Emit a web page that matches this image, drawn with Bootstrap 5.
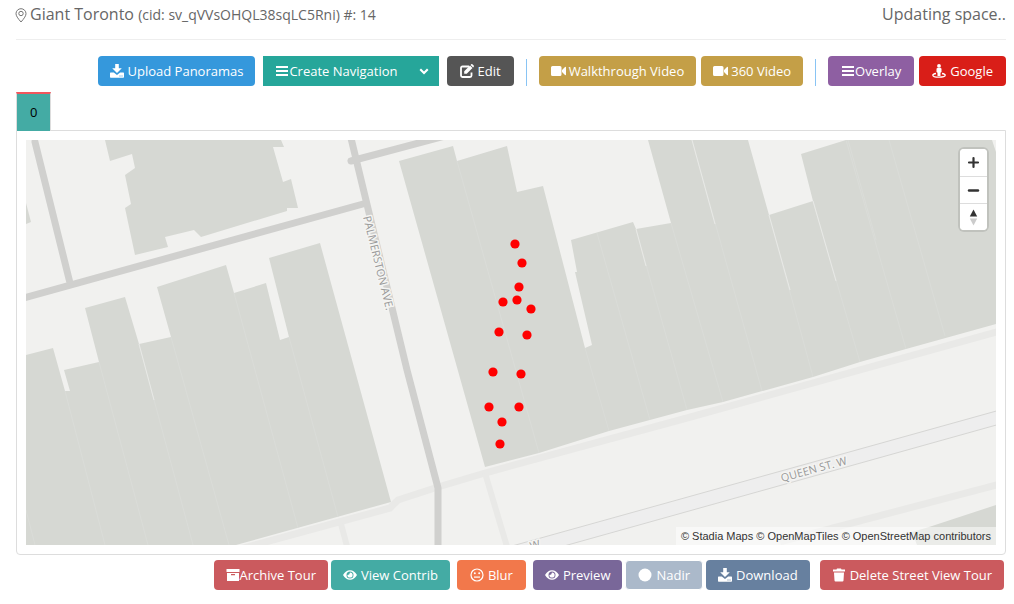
<!DOCTYPE html>
<html lang="en">
<head>
<meta charset="utf-8">
<meta name="viewport" content="width=device-width, initial-scale=1">
<title>Giant Toronto</title>
<link href="https://cdn.jsdelivr.net/npm/bootstrap@5.3.0/dist/css/bootstrap.min.css" rel="stylesheet">
<style>
body { font-family: "Open Sans", sans-serif; font-size: 13px; color: #333; background: #fff; }
.page { padding: 0 8px 8px 16px; }
.page-head { height: 40px; padding-top: 2px; border-bottom: 1px solid #eee; color: #666; line-height: 24px; }
.page-head h1, .state { font-size: 16px; line-height: 24px; font-weight: 400; }
.page-head h1 small { font-size: 14px; }
.page-head svg { width: 12px; height: 15px; margin: 0 3px 0 -1px; }
.tool { --bs-btn-font-size: 13px; --bs-btn-line-height: 20px; --bs-btn-padding-x: 11px; --bs-btn-padding-y: 4px; --bs-btn-border-radius: 4px;
  --bs-btn-color: #fff; --bs-btn-hover-color: #fff; --bs-btn-active-color: #fff; --bs-btn-disabled-color: #fff; --bs-btn-disabled-opacity: .55;
  display: inline-flex; align-items: center; justify-content: center; gap: 4px; white-space: nowrap; }
.tool, .tool:hover, .tool:disabled { background-color: var(--tone); }
.tool svg { width: 14px; height: 14px; fill: currentColor; flex: none; }
.tool.roomy { --bs-btn-padding-x: 12px; }
.tool.tight { gap: 0; }
.tool.video { gap: 2px; }
.tool.video svg { width: 16px; }
.tone-blue { --tone: #3598dc; }
.tone-green { --tone: #26a69a; }
.tone-dark { --tone: #555; }
.tone-gold { --tone: #c49f47; }
.tone-purple { --tone: #8e5fa2; }
.tone-red { --tone: #d91e18; }
.tone-rose { --tone: #cb5a5e; }
.tone-teal { --tone: #44aba4; }
.tone-orange { --tone: #f2784b; }
.tone-plum { --tone: #796799; }
.tone-slate { --tone: #67809f; }
.near { margin-right: 5px; }
.bottom-tools .near { margin-right: 3px; }
.apart { margin-right: 7px; }
.far { margin-right: 10px; }
.top-tools { padding: 16px 0 6px; }
.rule { width: 1px; height: 27px; margin: 0 12px; background: #89c4f4; align-self: flex-end; }
.split .tool { border-radius: 0; }
.split .caret { --bs-btn-padding-x: 8px; }
.split .caret svg { width: 12px; }
.floors { border: 0; }
.floors .nav-link { margin: 0; padding: 8px 13px; line-height: 20px; height: 39px; border-radius: 0; border: 1px solid #ddd; border-bottom: 0; }
.floors .nav-link.active { background: #44aba4; color: #000; border-color: #ddd; border-top: 2px solid #f3565d; }
.map-panel { margin-top: -1px; padding: 9px; border: 1px solid #ddd; border-radius: 0 0 4px 4px; }
.map { display: block; width: 100%; height: auto; background: #f1f1ef; }
.zooms { position: absolute; top: 9px; right: 9px; width: 27px; border-radius: 4px; background: #fff; box-shadow: 0 0 0 2px rgba(0,0,0,.1); overflow: hidden; }
.zooms button { display: flex; width: 27px; height: 27px; padding: 0; border: 0; background: #fff; align-items: center; justify-content: center; }
.zooms button + button { border-top: 1px solid #ddd; }
.zooms svg { width: 13px; height: 17px; }
.credits { position: absolute; right: 0; bottom: 0; padding: 0 5px; background: rgba(255,255,255,.5); font: 11px/18px "Liberation Sans", sans-serif; }
.credits a { color: #333; text-decoration: none; }
.bottom-tools { padding: 5px 2px 0 0; }
</style>
</head>
<body>
<svg class="d-none">
  <symbol id="i-download" viewBox="0 0 14 14"><path d="M5.2 0h3.6v4.2h3L7 9 2.200 4.200h3z"/><path fill-rule="evenodd" d="M.6 8.600h3.200L7 11l3.200-2.400h3.200q.6 0 .6.6V13q0 .7-.7.7H.7Q0 13.700 0 13V9.200q0-.6.6-.6zM9.500 11.600v1h1v-1zm2 0v1h1v-1z"/></symbol>
  <symbol id="i-bars" viewBox="0 0 14 14"><path d="M1 2h12v2H1zm0 4h12v2H1zm0 4h12v2H1z"/></symbol>
  <symbol id="i-video" viewBox="0 0 16 14"><path d="M1.500 2h7.500q1.500 0 1.500 1.500v7Q10.500 12 9 12H1.500Q0 12 0 10.500v-7Q0 2 1.500 2zM11 6l3-3q.8-.5 1 .3v7.400q-.2.800-1 .3l-3-3z"/></symbol>
  <symbol id="i-eye" viewBox="0 0 14 14"><path fill-rule="evenodd" d="M0 7Q2.700 2.300 7 2.300T14 7q-2.700 4.700-7 4.700T0 7zm3.500 0a3.500 3.500 0 1 0 7 0 3.500 3.500 0 1 0-7 0z"/><path d="M7 4.400A2.600 2.600 0 1 1 4.400 7Q6.700 7 7 4.400z"/></symbol>
</svg>
<div class="page">
  <header class="page-head d-flex justify-content-between">
    <h1 class="m-0"><svg viewBox="0 0 12 15" fill="none" stroke="#777"><path d="M6 14Q1 8.500 1 5.700a5 5 0 0 1 10 0Q11 8.500 6 14z"/><circle cx="6" cy="5.500" r="2.200"/></svg>Giant Toronto <small>(cid: sv_qVVsOHQL38sqLC5Rni) #: 14</small></h1>
    <div class="state">Updating space..</div>
  </header>

  <div class="top-tools d-flex flex-wrap justify-content-end">
    <button type="button" class="btn tool tone-blue me-2"><svg><use href="#i-download"/></svg>Upload Panoramas</button>
    <div class="btn-group split me-2">
      <button type="button" class="btn tool tight tone-green"><svg><use href="#i-bars"/></svg>Create Navigation</button>
      <button type="button" class="btn tool caret tone-green" aria-label="More navigation"><svg viewBox="0 0 12 14"><path d="M1.500 6L3 4.500l3 3 3-3L10.500 6 6 10.500z"/></svg></button>
    </div>
    <button type="button" class="btn tool roomy tone-dark"><svg viewBox="0 0 14 14"><path d="M9 2.500H2.500Q1 2.500 1 4v7.500Q1 13 2.500 13H10q1.500 0 1.500-1.500V8.500" fill="none" stroke="currentColor" stroke-width="1.800"/><path d="M4.200 7.300L10 1.500 12.500 4 6.700 9.800H4.200zM10.600.9l.6-.6q.6-.5 1.200 0l1.300 1.300q.5.600 0 1.200l-.6.6z"/></svg>Edit</button>
    <span class="rule"></span>
    <button type="button" class="btn tool video tone-gold near"><svg><use href="#i-video"/></svg>Walkthrough Video</button>
    <button type="button" class="btn tool video tone-gold"><svg><use href="#i-video"/></svg>360 Video</button>
    <span class="rule"></span>
    <button type="button" class="btn tool tight roomy tone-purple near"><svg><use href="#i-bars"/></svg>Overlay</button>
    <button type="button" class="btn tool roomy tone-red"><svg viewBox="0 0 14 14"><circle cx="7" cy="1.900" r="1.900"/><path d="M5.500 4h3q1 0 1 1v3l-1 .8V12h-3V8.800l-1-.8V5q0-1 1-1z"/><path d="M4 9.500Q.8 10 .8 11.300q0 1.900 6.200 1.900t6.200-1.900Q13.200 10 10 9.500" fill="none" stroke="currentColor" stroke-width="1.300"/></svg>Google</button>
  </div>

  <ul class="nav nav-tabs floors">
    <li class="nav-item"><a class="nav-link active" href="#floor">0</a></li>
  </ul>
  <main id="floor" class="map-panel">
    <div class="position-relative overflow-hidden">
      <svg class="map" viewBox="26 140 970 405" role="img" aria-label="Street map">
        <g fill="none" stroke="#e9e9e7" stroke-width="7">
          <path d="M240 549L390 508 398 500 438 487 485 473 687 418 1000 331M780 542L1000 484"/>
          <path d="M485 473L508 550M341 524L348 550" stroke-width="6"/>
        </g>
        <path d="M516 545L996 411V425L568 545z" fill="#eee"/>
        <path d="M512 546L1000 410M564 546L1000 424" stroke="#d6d6d4" fill="none"/>
        <g fill="#d6d8d3">
          <path d="M26 203L31 222 26 224z"/>
          <path d="M105 140L110 161 132 154 135 168 125 175 131 204 125 208 135 255 168 247 165 237 194 230 201 237 287 211V208H298L291 179 283 182 273 147H284L281 140z"/>
          <path d="M26 355L53 348 65 391H70L64 370 99 362 85 308 125 297 139 344 171 337 157 287 226 265 234 293 266 283 280 340 289 337 269 258 320 243 391 502 236 545H26z"/>
          <path d="M399 161L453 146 457 161 507 146 517 192 543 186 585 348 592 345 575 272H577L571 240 633 222 636 229 671 223 648 140H748L769 215 813 201 801 154 846 140H992L996 152V324L906 349 860 362 813 377 723 402 687 410 609 431 539 453 485 467z"/>
          <path d="M996 505L929 527 912 532 917 545H996z"/>
        </g>
        <g fill="none" stroke="#dadcd8">
          <path d="M65 391L105 545M99 362L148 545M139 344L193 545M171 337L229 545M234 293L298 528M289 337L338 517M26 510L35 545"/>
          <path d="M457 161L539 453M585 348L609 431M597 233L650 420M636 229L687 410M671 223L723 402M692 140L762 391M769 215L813 377M813 201L860 362M846 140L906 349M848 140L876 240M889 140L945 336"/>
          <path d="M139 344L154 400M636 229L646 266M692 140L715 224M769 215L790 290M813 201L836 281" stroke="#e8e9e6"/>
        </g>
        <g fill="none" stroke="#d0d0ce" stroke-width="7" stroke-linecap="round">
          <path d="M35 142L70 283M20 299L363 204M351 161L445 136"/>
          <path d="M350 134L407 370 438 488V550" stroke-linejoin="round"/>
        </g>
        <path id="palmerston" d="M363 217L387 314" fill="none"/>
        <path id="queen" d="M782 482L851 463" fill="none"/>
        <g font-family="Open Sans, sans-serif" font-size="11" fill="#999" stroke="#f4f4f2" stroke-width="3" paint-order="stroke" stroke-linejoin="round">
          <text><textPath href="#palmerston">PALMERSTON AVE.</textPath></text>
          <text><textPath href="#queen">QUEEN ST. W</textPath></text>
          <text transform="translate(531 550) rotate(-15)">W</text>
        </g>
        <g fill="#f00">
          <circle cx="515" cy="244" r="4.600"/><circle cx="522" cy="263" r="4.600"/><circle cx="519" cy="287" r="4.600"/><circle cx="517" cy="300" r="4.600"/><circle cx="503" cy="302" r="4.600"/><circle cx="531" cy="309" r="4.600"/><circle cx="499" cy="332" r="4.600"/><circle cx="527" cy="335" r="4.600"/><circle cx="493" cy="372" r="4.600"/><circle cx="521" cy="374" r="4.600"/><circle cx="489" cy="407" r="4.600"/><circle cx="519" cy="407" r="4.600"/><circle cx="502" cy="422" r="4.600"/><circle cx="500" cy="444" r="4.600"/>
        </g>
      </svg>
      <div class="zooms">
        <button type="button" aria-label="Zoom in"><svg viewBox="0 0 13 17"><path d="M6.500 4v9M2 8.500h9" stroke="#333" stroke-width="2.200" stroke-linecap="round"/></svg></button>
        <button type="button" aria-label="Zoom out"><svg viewBox="0 0 13 17"><path d="M2 8.500h9" stroke="#333" stroke-width="2.400" stroke-linecap="round"/></svg></button>
        <button type="button" aria-label="Reset bearing"><svg viewBox="0 0 13 17"><path d="M6.500 .5l3.700 7H2.800z" fill="#333"/><path d="M6.500 16.500l3.700-7H2.800z" fill="#ccc"/></svg></button>
      </div>
      <div class="credits"><a href="#stadia">© Stadia Maps</a> <a href="#tiles">© OpenMapTiles</a> <a href="#osm">© OpenStreetMap contributors</a></div>
    </div>
  </main>

  <div class="bottom-tools d-flex flex-wrap justify-content-end">
    <button type="button" class="btn tool tight tone-rose near"><svg viewBox="0 0 14 14"><path fill-rule="evenodd" d="M.5 1h13v3H.5zM1 5h12v8H1zm4 1v1.200h4V6z"/></svg>Archive Tour</button>
    <button type="button" class="btn tool tone-teal apart"><svg><use href="#i-eye"/></svg>View Contrib</button>
    <button type="button" class="btn tool roomy tone-orange apart"><svg viewBox="0 0 14 14"><circle cx="7" cy="7" r="6" fill="none" stroke="currentColor" stroke-width="1.200"/><circle cx="4.800" cy="5.300" r="1"/><circle cx="9.200" cy="5.300" r="1"/><path d="M4 8.500h6v1.200H4z"/></svg>Blur</button>
    <button type="button" class="btn tool tone-plum near"><svg><use href="#i-eye"/></svg>Preview</button>
    <button type="button" class="btn tool roomy tone-slate near" disabled><svg viewBox="0 0 14 14"><circle cx="7" cy="7" r="6.500"/></svg>Nadir</button>
    <button type="button" class="btn tool tone-slate far"><svg><use href="#i-download"/></svg>Download</button>
    <button type="button" class="btn tool tone-rose"><svg viewBox="0 0 14 14"><path d="M5 .5h4l.5 1H13v2H1v-2h3.500zM2 4.500h10l-.5 8q-.1 1-1 1h-7q-.9 0-1-1z"/></svg>Delete Street View Tour</button>
  </div>
</div>
<script src="https://cdn.jsdelivr.net/npm/bootstrap@5.3.0/dist/js/bootstrap.bundle.min.js"></script>
</body>
</html>
